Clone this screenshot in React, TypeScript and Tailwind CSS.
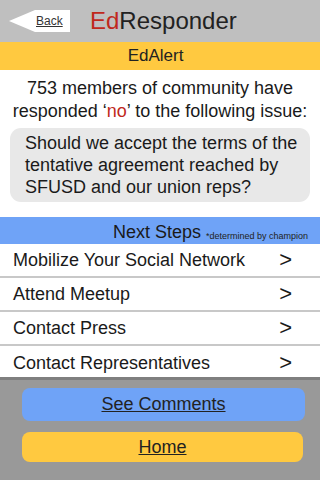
import React from "react";

const steps = [
  "Mobilize Your Social Network",
  "Attend Meetup",
  "Contact Press",
  "Contact Representatives",
];

function BackButton() {
  return (
    <button className="relative ml-[9px] flex h-[22px] w-[61px] items-center">
      <svg
        className="absolute inset-0"
        width="61"
        height="22"
        viewBox="0 0 61 22"
      >
        <polygon points="0,11 26,0 61,0 61,22 26,22" fill="#ffffff" />
      </svg>
      <span className="relative ml-[27px] text-[12px] leading-none text-[#333] underline">
        Back
      </span>
    </button>
  );
}

export default function App() {
  return (
    <div
      className="flex h-[480px] w-[320px] flex-col overflow-hidden bg-white"
      style={{ fontFamily: '"Liberation Sans", Arial, sans-serif' }}
    >
      {/* header */}
      <div className="flex h-[42px] items-center bg-[#bfbfbf]">
        <BackButton />
        <h1 className="ml-[20px] text-[24px] leading-none text-[#222]">
          <span className="text-[#c0281c]">Ed</span>Responder
        </h1>
      </div>

      <div className="flex h-[28px] items-center justify-center bg-[#ffc940] pr-[9px] text-[17px] text-[#222]">
        EdAlert
      </div>

      {/* alert body */}
      <div className="flex flex-col px-[10px] pt-[7px]">
        <p className="text-center text-[18px] leading-[23px] text-[#1a1a1a]">
          753 members of community have responded ‘
          <span className="text-[#c0281c]">no</span>’ to the following issue:
        </p>
        <div className="mt-[5px] rounded-[11px] bg-[#e8e8e8] py-[4px] pl-[15px] pr-[6px] text-[18px] leading-[22px] text-[#1a1a1a]">
          Should we accept the terms of the tentative agreement reached by
          SFUSD and our union reps?
        </div>
      </div>

      {/* next steps */}
      <div className="mt-[15px] flex h-[27px] items-end justify-end bg-[#6fa3f7] pb-[3px] pr-[12px]">
        <span className="text-[18px] leading-none text-[#1a1a1a]">Next Steps</span>
        <span className="ml-[5px] text-[9px] leading-none text-[#222]">
          *determined by champion
        </span>
      </div>

      <ul className="flex flex-col">
        {steps.map((s, i) => (
          <li
            key={s}
            className={
              "flex h-[34px] items-center justify-between pl-[13px] pr-[28px] text-[18px] text-[#1a1a1a] " +
              (i < steps.length - 1 ? "border-b-2 border-[#c8c8c8]" : "")
            }
          >
            <span>{s}</span>
            <span className="text-[22px] leading-none">&gt;</span>
          </li>
        ))}
      </ul>

      {/* footer */}
      <div className="-mt-[3px] flex flex-1 flex-col gap-[11px] border-t-[3px] border-[#7f7f7f] bg-[#999999] pl-[22px] pr-[15px] pt-[8px]">
        <button className="h-[33px] rounded-[8px] bg-[#6fa3f7] text-[18px] text-[#222] underline">
          See Comments
        </button>
        <button className="mr-[2px] h-[30px] rounded-[8px] bg-[#ffc940] text-[18px] text-[#222] underline">
          Home
        </button>
      </div>
    </div>
  );
}
